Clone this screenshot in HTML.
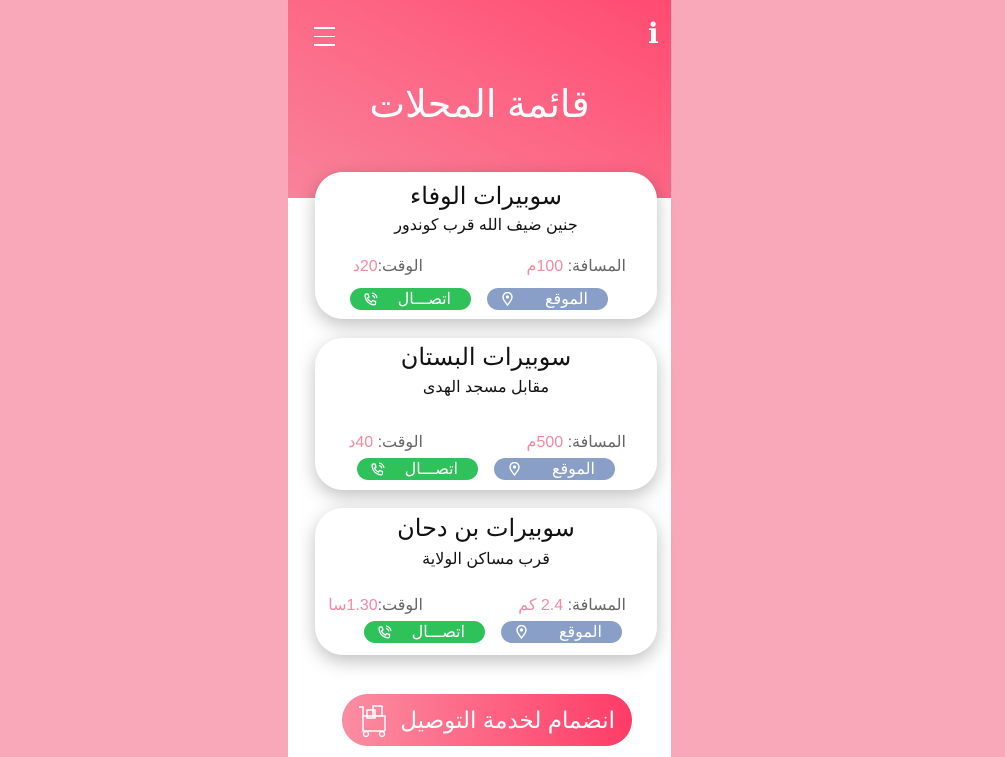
<!DOCTYPE html>
<html><head><meta charset="utf-8"><style>
*{margin:0;padding:0;box-sizing:border-box}
body{width:1005px;height:757px;background:#f8a8b9;position:relative;overflow:hidden;font-family:"Liberation Sans","Noto Sans CJK SC",sans-serif}
.phone{position:absolute;left:288px;top:0;width:383px;height:757px;background:#fff}
.hdr{position:absolute;left:0;top:0;width:383px;height:198px;background:linear-gradient(210deg,#ff4a70 0%,#fd6584 45%,#f8839a 100%)}
.menu{position:absolute;left:26px;top:27px;width:21px}
.menu i{display:block;height:1.5px;background:#fff;margin-bottom:7px}
.info{position:absolute;left:360px;top:17px;color:#fff;font:bold 28px "DejaVu Serif",serif}
.title{position:absolute;left:0;width:383px;top:82px;text-align:center;color:#fff;font-size:38px;direction:rtl}
.card{position:absolute;left:27px;width:342px;background:#fff;border-radius:28px;box-shadow:0 6px 18px rgba(0,0,0,.25);direction:rtl}
.card .n{position:absolute;width:100%;text-align:center;font-size:24px;color:#111}
.card .a{position:absolute;width:100%;text-align:center;font-size:16px;color:#111}
.lab{position:absolute;font-size:16px;color:#666;white-space:nowrap}
.lab b{font-weight:normal;color:#f58aa0}
.btn{position:absolute;width:121px;height:22px;border-radius:11px;color:#fff;font-size:16px;line-height:22px}
.loc{background:#8a9fc7}.call{background:#2fc15a}
.btn span{position:absolute;right:20px;top:1px}
.btn svg{position:absolute;top:4px}
.join{position:absolute;left:54px;top:694px;width:290px;height:52px;border-radius:26px;background:linear-gradient(90deg,#fb8da2,#ff3c66);color:#fff;font-size:23px;line-height:52px;direction:rtl}
</style></head><body>
<div class="phone">
 <div class="hdr">
  <div class="menu"><i></i><i></i><i></i></div>
  <div class="info">i</div>
  <div class="title">قائمة المحلات</div>
 </div>

 <div class="card" style="top:172px;height:147px">
  <div class="n" style="top:10px">سوبيرات الوفاء</div>
  <div class="a" style="top:43px">جنين ضيف الله قرب كوندور</div>
  <div class="lab" style="right:31px;top:84px">المسافة: <b>100م</b></div>
  <div class="lab" style="right:234px;top:84px">الوقت:<b>20د</b></div>
  <div class="btn loc" style="left:172px;top:116px"><span>الموقع</span><svg style="left:15px" width="11" height="14" viewBox="0 0 11 14"><path d="M5.5 13C2 8.5 1 7 1 5a4.5 4.5 0 0 1 9 0c0 2-1 3.5-4.5 8z" fill="none" stroke="#fff" stroke-width="1.4"/><circle cx="5.5" cy="5" r="1.6" fill="#fff"/></svg></div>
  <div class="btn call" style="left:35px;top:116px"><span>اتصـــال</span><svg style="left:13px" width="16" height="15" viewBox="0 0 16 15"><path d="M3 2l2 0 1 3-1.5 1c.8 1.8 2.2 3.2 4 4L9.5 8.5l3 1v2c0 1-1 1.5-2 1.3C6 12 3 9 2.2 5 2 3.5 2 2 3 2z" fill="none" stroke="#fff" stroke-width="1.3"/><path d="M9 1a6 6 0 0 1 5 5M9 3.5a3.5 3.5 0 0 1 2.8 2.8" fill="none" stroke="#fff" stroke-width="1.2"/></svg></div>
 </div>

 <div class="card" style="top:338px;height:152px">
  <div class="n" style="top:5px">سوبيرات البستان</div>
  <div class="a" style="top:39px">مقابل مسجد الهدى</div>
  <div class="lab" style="right:31px;top:94px">المسافة: <b>500م</b></div>
  <div class="lab" style="right:234px;top:94px">الوقت: <b>40د</b></div>
  <div class="btn loc" style="left:179px;top:120px"><span>الموقع</span><svg style="left:15px" width="11" height="14" viewBox="0 0 11 14"><path d="M5.5 13C2 8.5 1 7 1 5a4.5 4.5 0 0 1 9 0c0 2-1 3.5-4.5 8z" fill="none" stroke="#fff" stroke-width="1.4"/><circle cx="5.5" cy="5" r="1.6" fill="#fff"/></svg></div>
  <div class="btn call" style="left:42px;top:120px"><span>اتصـــال</span><svg style="left:13px" width="16" height="15" viewBox="0 0 16 15"><path d="M3 2l2 0 1 3-1.5 1c.8 1.8 2.2 3.2 4 4L9.5 8.5l3 1v2c0 1-1 1.5-2 1.3C6 12 3 9 2.2 5 2 3.5 2 2 3 2z" fill="none" stroke="#fff" stroke-width="1.3"/><path d="M9 1a6 6 0 0 1 5 5M9 3.5a3.5 3.5 0 0 1 2.8 2.8" fill="none" stroke="#fff" stroke-width="1.2"/></svg></div>
 </div>

 <div class="card" style="top:508px;height:147px">
  <div class="n" style="top:6px">سوبيرات بن دحان</div>
  <div class="a" style="top:41px">قرب مساكن الولاية</div>
  <div class="lab" style="right:31px;top:87px">المسافة: <b>2.4 كم</b></div>
  <div class="lab" style="right:234px;top:87px">الوقت:<b>1.30سا</b></div>
  <div class="btn loc" style="left:186px;top:113px"><span>الموقع</span><svg style="left:15px" width="11" height="14" viewBox="0 0 11 14"><path d="M5.5 13C2 8.5 1 7 1 5a4.5 4.5 0 0 1 9 0c0 2-1 3.5-4.5 8z" fill="none" stroke="#fff" stroke-width="1.4"/><circle cx="5.5" cy="5" r="1.6" fill="#fff"/></svg></div>
  <div class="btn call" style="left:49px;top:113px"><span>اتصـــال</span><svg style="left:13px" width="16" height="15" viewBox="0 0 16 15"><path d="M3 2l2 0 1 3-1.5 1c.8 1.8 2.2 3.2 4 4L9.5 8.5l3 1v2c0 1-1 1.5-2 1.3C6 12 3 9 2.2 5 2 3.5 2 2 3 2z" fill="none" stroke="#fff" stroke-width="1.3"/><path d="M9 1a6 6 0 0 1 5 5M9 3.5a3.5 3.5 0 0 1 2.8 2.8" fill="none" stroke="#fff" stroke-width="1.2"/></svg></div>
 </div>

 <div class="join"><span style="position:absolute;right:17px">انضمام لخدمة التوصيل</span>
  <svg style="position:absolute;left:15px;top:10px" width="32" height="34" viewBox="0 0 32 34"><path d="M2 3h4v24h22M6 12h22v15" fill="none" stroke="#fff" stroke-width="1.5"/><rect x="10" y="6" width="8" height="8" fill="none" stroke="#fff" stroke-width="1.5"/><rect x="16" y="2" width="9" height="10" fill="none" stroke="#fff" stroke-width="1.5"/><circle cx="9" cy="30" r="2.5" fill="none" stroke="#fff" stroke-width="1.5"/><circle cx="25" cy="30" r="2.5" fill="none" stroke="#fff" stroke-width="1.5"/></svg>
 </div>
</div>
</body></html>
